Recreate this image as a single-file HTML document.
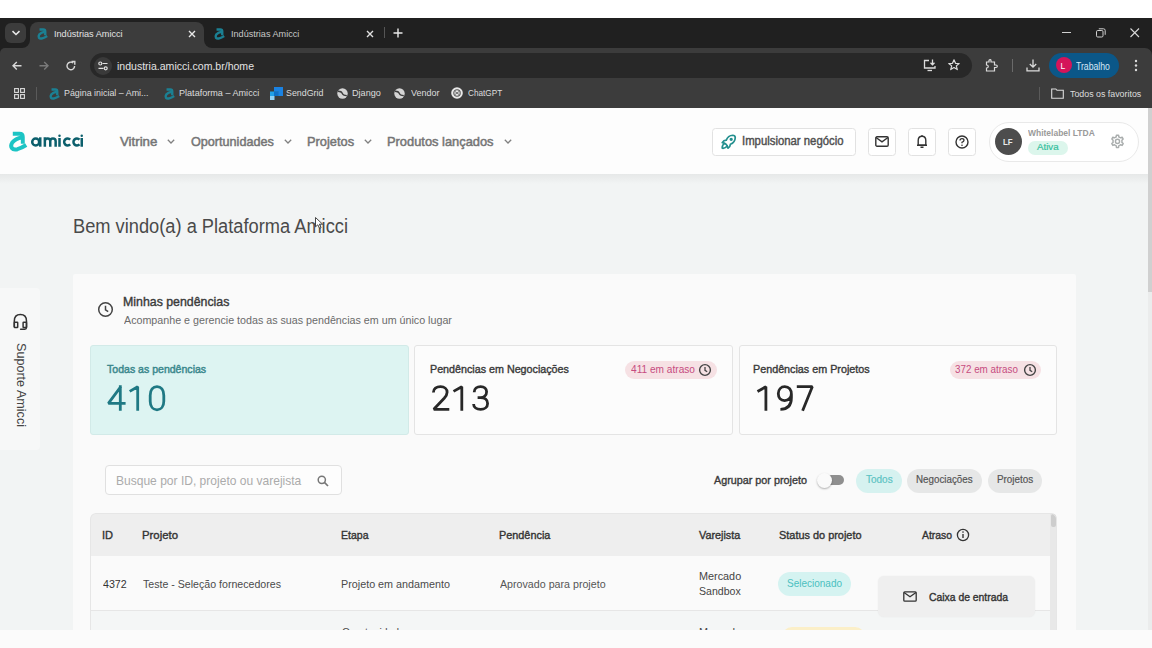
<!DOCTYPE html>
<html><head><meta charset="utf-8">
<style>
*{box-sizing:border-box;margin:0;padding:0}
html,body{width:1152px;height:648px;overflow:hidden;background:#fff;font-family:"Liberation Sans",sans-serif}
.a{position:absolute}
.t{position:absolute;white-space:nowrap;line-height:1;transform-origin:0 0}
svg{position:absolute;overflow:visible}
</style></head><body>
<!-- browser chrome -->
<div class="a" style="left:0;top:18px;width:1152px;height:90px;background:#202020"></div>
<div class="a" style="left:0;top:48px;width:1152px;height:60px;background:#3c3c3c;border-radius:5px 7px 0 0"></div>
<!-- active tab -->
<div class="a" style="left:30px;top:22px;width:174px;height:26px;background:#3c3c3c;border-radius:8px 8px 0 0"></div>
<div class="a" style="left:22px;top:40px;width:8px;height:8px;background:#3c3c3c"></div>
<div class="a" style="left:22px;top:40px;width:8px;height:8px;background:#202020;border-radius:0 0 8px 0"></div>
<!-- tab dropdown -->
<div class="a" style="left:5px;top:23px;width:21px;height:20px;background:#3c3c3c;border-radius:6px"></div>
<svg style="left:11px;top:30px" width="10" height="6"><path d="M1.5 1.2 L5 4.5 L8.5 1.2" fill="none" stroke="#e8e8e8" stroke-width="1.6"/></svg>
<div class="a" style="left:204px;top:40px;width:8px;height:8px;background:#3c3c3c"></div>
<div class="a" style="left:204px;top:40px;width:8px;height:8px;background:#202020;border-radius:0 0 0 8px"></div>
<svg style="left:37px;top:28px" width="11" height="12" viewBox="3 3 18 21"><path d="M6.8 5.7 H13.5 Q16.8 5.7 16.8 9 V15.8" fill="none" stroke="#1b8093" stroke-width="4.2"/><path d="M16 9.5 Q9.5 10.5 6.3 14.5 Q4.3 17.5 5.8 20 Q7.5 22.3 11.5 21.2 Q15.5 20 20.2 17" fill="none" stroke="#1b8093" stroke-width="4.3"/></svg>
<div class="t" style="left:53.53px;top:29.00px;font-size:9.8px;color:#e3e3e3;transform:scaleX(0.9332);">Indústrias Amicci</div>
<svg style="left:188px;top:30px" width="8" height="8"><path d="M1 1 L7 7 M7 1 L1 7" stroke="#e8e8e8" stroke-width="1.4"/></svg>
<!-- second tab -->
<svg style="left:214px;top:28px" width="11" height="12" viewBox="3 3 18 21"><path d="M6.8 5.7 H13.5 Q16.8 5.7 16.8 9 V15.8" fill="none" stroke="#1b8093" stroke-width="4.2"/><path d="M16 9.5 Q9.5 10.5 6.3 14.5 Q4.3 17.5 5.8 20 Q7.5 22.3 11.5 21.2 Q15.5 20 20.2 17" fill="none" stroke="#1b8093" stroke-width="4.3"/></svg>
<div class="t" style="left:231.40px;top:29.00px;font-size:9.8px;color:#c8c8c8;transform:scaleX(0.9292);">Indústrias Amicci</div>
<svg style="left:366px;top:30px" width="8" height="8"><path d="M1 1 L7 7 M7 1 L1 7" stroke="#e0e0e0" stroke-width="1.4"/></svg>
<div class="a" style="left:384px;top:27px;width:1px;height:11px;background:#555"></div>
<svg style="left:393px;top:28px" width="10" height="10"><path d="M5 0.5 V9.5 M0.5 5 H9.5" stroke="#e8e8e8" stroke-width="1.4"/></svg>
<!-- window controls -->
<div class="a" style="left:1062px;top:32px;width:9px;height:1px;background:#d0d0d0"></div>
<svg style="left:1096px;top:28px" width="10" height="10"><rect x="0.5" y="2.5" width="6.5" height="6.5" rx="1.2" fill="none" stroke="#d0d0d0" stroke-width="1"/><path d="M2.8 0.8 H7.5 Q9.2 0.8 9.2 2.5 V6.8" fill="none" stroke="#d0d0d0" stroke-width="1"/></svg>
<svg style="left:1130px;top:28px" width="10" height="10"><path d="M0.5 0.5 L9 9 M9 0.5 L0.5 9" stroke="#d8d8d8" stroke-width="1.1"/></svg>
<!-- toolbar -->
<svg style="left:12px;top:61px" width="10" height="10"><path d="M9.5 4.8 H1 M4.8 1 L1 4.8 L4.8 8.6" fill="none" stroke="#d8d8d8" stroke-width="1.4"/></svg>
<svg style="left:39px;top:61px" width="10" height="10"><path d="M0.5 4.8 H9 M5.2 1 L9 4.8 L5.2 8.6" fill="none" stroke="#7a7a7a" stroke-width="1.4"/></svg>
<svg style="left:66px;top:61px" width="10" height="10"><path d="M8.6 5 A3.8 3.8 0 1 1 7.2 2" fill="none" stroke="#d8d8d8" stroke-width="1.4"/><path d="M5.5 0.5 H8.8 V3.8" fill="none" stroke="#d8d8d8" stroke-width="1.4"/></svg>
<div class="a" style="left:90px;top:53px;width:882px;height:25px;background:#282828;border-radius:13px"></div>
<div class="a" style="left:94px;top:57px;width:18px;height:18px;background:#3a3a3a;border-radius:9px"></div>
<svg style="left:98px;top:61px" width="10" height="10"><circle cx="2.3" cy="2.5" r="1.5" fill="none" stroke="#e0e0e0" stroke-width="1.2"/><path d="M4.5 2.5 H9.5 M0.5 7.3 H5.5" stroke="#e0e0e0" stroke-width="1.2"/><circle cx="7.7" cy="7.3" r="1.5" fill="none" stroke="#e0e0e0" stroke-width="1.2"/></svg>
<div class="t" style="left:116.65px;top:60.00px;font-size:11.6px;color:#e3e3e3;transform:scaleX(0.9087);">industria.amicci.com.br/home</div>
<svg style="left:923px;top:59px" width="14" height="13"><path d="M6 1.5 H1.5 V9 H12 V7" fill="none" stroke="#dcdcdc" stroke-width="1.3"/><path d="M4.5 11.5 H9" stroke="#dcdcdc" stroke-width="1.3"/><path d="M9.5 0.5 V5.5 M7.5 3.8 L9.5 5.8 L11.5 3.8" fill="none" stroke="#dcdcdc" stroke-width="1.3"/></svg>
<svg style="left:948px;top:59px" width="12" height="12"><path d="M6 0.8 L7.5 4.3 L11.2 4.5 L8.3 6.9 L9.3 10.6 L6 8.5 L2.7 10.6 L3.7 6.9 L0.8 4.5 L4.5 4.3 Z" fill="none" stroke="#dcdcdc" stroke-width="1.2" stroke-linejoin="round"/></svg>
<svg style="left:985px;top:59px" width="14" height="13"><path d="M1.5 3 H4 V1.5 Q4 0.7 5 0.7 Q6 0.7 6 1.5 V3 H9.5 V6 H11 Q12.3 6 12.3 7.3 Q12.3 8.5 11 8.5 H9.5 V12 H1.5 V9 Q3.3 9 3.3 7.5 Q3.3 6 1.5 6 Z" fill="none" stroke="#dcdcdc" stroke-width="1.2"/></svg>
<div class="a" style="left:1012px;top:59px;width:1px;height:13px;background:#6a6a6a"></div>
<svg style="left:1026px;top:59px" width="14" height="13"><path d="M7 0.5 V8 M3.8 5 L7 8.2 L10.2 5 M1 8.5 V11.8 H13 V8.5" fill="none" stroke="#dcdcdc" stroke-width="1.3"/></svg>
<div class="a" style="left:1049px;top:53px;width:70px;height:25px;background:#0b5788;border-radius:13px"></div>
<div class="a" style="left:1056px;top:57px;width:16px;height:16px;background:#d4145a;border-radius:8px"></div>
<div class="t" style="left:1060.40px;top:62.00px;font-size:8.5px;color:#fff;">L</div>
<div class="t" style="left:1076.36px;top:61.00px;font-size:10.5px;color:#d6e8f8;transform:scaleX(0.8257);">Trabalho</div>
<svg style="left:1134px;top:59px" width="4" height="13"><circle cx="2" cy="2" r="1.2" fill="#dcdcdc"/><circle cx="2" cy="6.5" r="1.2" fill="#dcdcdc"/><circle cx="2" cy="11" r="1.2" fill="#dcdcdc"/></svg>
<!-- bookmarks bar -->
<svg style="left:14px;top:88px" width="11" height="11"><rect x="0.6" y="0.6" width="3.8" height="3.8" fill="none" stroke="#dcdcdc" stroke-width="1.1"/><rect x="6.6" y="0.6" width="3.8" height="3.8" fill="none" stroke="#dcdcdc" stroke-width="1.1"/><rect x="0.6" y="6.6" width="3.8" height="3.8" fill="none" stroke="#dcdcdc" stroke-width="1.1"/><rect x="6.6" y="6.6" width="3.8" height="3.8" fill="none" stroke="#dcdcdc" stroke-width="1.1"/></svg>
<div class="a" style="left:36px;top:87px;width:1px;height:13px;background:#5a5a5a"></div>
<svg style="left:49px;top:88px" width="11" height="12" viewBox="3 3 18 21"><path d="M6.8 5.7 H13.5 Q16.8 5.7 16.8 9 V15.8" fill="none" stroke="#1b8093" stroke-width="4.2"/><path d="M16 9.5 Q9.5 10.5 6.3 14.5 Q4.3 17.5 5.8 20 Q7.5 22.3 11.5 21.2 Q15.5 20 20.2 17" fill="none" stroke="#1b8093" stroke-width="4.3"/></svg>
<div class="t" style="left:63.59px;top:88.00px;font-size:9.6px;color:#dcdcdc;transform:scaleX(0.9256);">Página inicial – Ami...</div>
<svg style="left:164px;top:88px" width="11" height="12" viewBox="3 3 18 21"><path d="M6.8 5.7 H13.5 Q16.8 5.7 16.8 9 V15.8" fill="none" stroke="#1b8093" stroke-width="4.2"/><path d="M16 9.5 Q9.5 10.5 6.3 14.5 Q4.3 17.5 5.8 20 Q7.5 22.3 11.5 21.2 Q15.5 20 20.2 17" fill="none" stroke="#1b8093" stroke-width="4.3"/></svg>
<div class="t" style="left:179.36px;top:88.00px;font-size:9.6px;color:#dcdcdc;transform:scaleX(0.9465);">Plataforma – Amicci</div>
<svg style="left:270px;top:87px" width="13" height="13"><rect x="4" y="0" width="9" height="4.5" fill="#1a82e2"/><rect x="0" y="4.5" width="8.5" height="4.5" fill="#21a0e8"/><rect x="4" y="4.5" width="4.5" height="4.5" fill="#0f6fc6"/><rect x="0" y="9" width="4.5" height="4" fill="#8fd0f5"/><rect x="8.5" y="0" width="4.5" height="9" fill="#1a82e2"/></svg>
<div class="t" style="left:286.15px;top:88.00px;font-size:9.6px;color:#dcdcdc;transform:scaleX(0.9234);">SendGrid</div>
<svg style="left:337px;top:88px" width="11" height="11" viewBox="0 0 11 11"><circle cx="5.5" cy="5.5" r="5.2" fill="#d4d4d4"/><path d="M1 3.2 Q4.5 3.2 5.2 5.2 Q5.8 7.6 9.8 7.6" fill="none" stroke="#3c3c3c" stroke-width="1.4"/></svg>
<div class="t" style="left:352.36px;top:88.00px;font-size:9.6px;color:#dcdcdc;transform:scaleX(0.9473);">Django</div>
<svg style="left:394px;top:88px" width="11" height="11" viewBox="0 0 11 11"><circle cx="5.5" cy="5.5" r="5.2" fill="#d4d4d4"/><path d="M1 3.2 Q4.5 3.2 5.2 5.2 Q5.8 7.6 9.8 7.6" fill="none" stroke="#3c3c3c" stroke-width="1.4"/></svg>
<div class="t" style="left:410.54px;top:88.00px;font-size:9.6px;color:#dcdcdc;transform:scaleX(0.9370);">Vendor</div>
<svg style="left:451px;top:87px" width="12" height="12"><circle cx="6" cy="6" r="5.8" fill="#e8e8e8"/><circle cx="6" cy="6" r="3.2" fill="none" stroke="#555" stroke-width="1.1"/><path d="M4 4.5 L8 7.5 M8 4.5 L4 7.5" stroke="#555" stroke-width="0.8"/></svg>
<div class="t" style="left:467.73px;top:88.00px;font-size:9.6px;color:#dcdcdc;transform:scaleX(0.8552);">ChatGPT</div>
<div class="a" style="left:1039px;top:87px;width:1px;height:13px;background:#5a5a5a"></div>
<svg style="left:1051px;top:88px" width="13" height="11"><path d="M0.7 1 H4.8 L6 2.3 H12.3 V10.3 H0.7 Z" fill="none" stroke="#dcdcdc" stroke-width="1.1"/></svg>
<div class="t" style="left:1070.37px;top:89.00px;font-size:9.6px;color:#dcdcdc;transform:scaleX(0.9212);">Todos os favoritos</div>

<!-- PAGE -->
<div class="a" style="left:0;top:108px;width:1148px;height:522px;background:#f2f4f4;overflow:hidden">
 <div class="a" style="left:0;top:66px;width:1148px;height:10px;background:linear-gradient(#e6e8e8,#f2f4f4)"></div>
 <div class="a" style="left:0;top:0;width:1148px;height:66px;background:#fdfdfd"></div>
</div>
<!-- header content -->
<svg style="left:6px;top:128px" width="24" height="26" viewBox="0 0 24 26">
<path d="M6.8 5.7 H13.5 Q16.8 5.7 16.8 9 V15.8" fill="none" stroke="#1cc4c4" stroke-width="3.9"/>
<path d="M16 9.5 Q9.5 10.5 6.3 14.5 Q4.3 17.5 5.8 20 Q7.5 22.3 11.5 21.2 Q15.5 20 20.2 17" fill="none" stroke="#1cc4c4" stroke-width="4"/>
</svg>
<svg style="left:8px;top:130px" width="80" height="24" viewBox="0 0 80 24">
<g fill="none" stroke="#0c5f6c" stroke-width="2.5">
<circle cx="27.7" cy="12" r="3.5"/><path d="M32.25 7.3 V16.7"/>
<path d="M36.85 7.3 V16.7 M36.85 11.2 Q36.85 8.55 39.55 8.55 Q42.25 8.55 42.25 11.2 V16.7 M42.25 11.2 Q42.25 8.55 44.95 8.55 Q47.65 8.55 47.65 11.2 V16.7"/>
<path d="M51.5 8 V16.7 M73.75 8 V16.7"/>
<path d="M62.2 9.6 A3.5 3.5 0 1 0 62.2 14.4 M71.5 9.6 A3.5 3.5 0 1 0 71.5 14.4"/>
</g>
<circle cx="51.5" cy="5.8" r="1.25" fill="#0c5f6c"/><circle cx="73.75" cy="5.8" r="1.25" fill="#0c5f6c"/>
</svg>
<div class="t" style="left:120.10px;top:135.00px;font-size:13.1px;-webkit-text-stroke:0.5px #757575;color:#757575;transform:scaleX(1.0137);">Vitrine</div>
<div class="t" style="left:190.89px;top:135.00px;font-size:13.1px;-webkit-text-stroke:0.5px #757575;color:#757575;transform:scaleX(0.9640);">Oportunidades</div>
<div class="t" style="left:307.08px;top:135.00px;font-size:13.1px;-webkit-text-stroke:0.5px #757575;color:#757575;transform:scaleX(0.9796);">Projetos</div>
<div class="t" style="left:387.10px;top:135.00px;font-size:13.1px;-webkit-text-stroke:0.5px #757575;color:#757575;transform:scaleX(0.9824);">Produtos lançados</div>
<svg style="left:167px;top:139px" width="8" height="5"><path d="M0.8 0.8 L4 4 L7.2 0.8" fill="none" stroke="#808080" stroke-width="1.3"/></svg>
<svg style="left:284px;top:139px" width="8" height="5"><path d="M0.8 0.8 L4 4 L7.2 0.8" fill="none" stroke="#808080" stroke-width="1.3"/></svg>
<svg style="left:364px;top:139px" width="8" height="5"><path d="M0.8 0.8 L4 4 L7.2 0.8" fill="none" stroke="#808080" stroke-width="1.3"/></svg>
<svg style="left:504px;top:139px" width="8" height="5"><path d="M0.8 0.8 L4 4 L7.2 0.8" fill="none" stroke="#808080" stroke-width="1.3"/></svg>

<div class="a" style="left:712px;top:128px;width:144px;height:28px;border:1px solid #e2e2e2;border-radius:3.5px;background:#fff"></div>
<svg style="left:718.7px;top:132px" width="19.5" height="19.5" viewBox="0 0 24 24"><g fill="none" stroke="#24908f" stroke-width="2.1" stroke-linecap="round" stroke-linejoin="round"><path d="M4 13a8 8 0 0 1 7 7a6 6 0 0 0 3 -5a9 9 0 0 0 6 -8a3 3 0 0 0 -3 -3a9 9 0 0 0 -8 6a6 6 0 0 0 -5 3"/><path d="M7 14a6 6 0 0 0 -3 6a6 6 0 0 0 6 -3"/><circle cx="15" cy="9" r="1"/></g></svg>
<div class="t" style="left:741.78px;top:136.00px;font-size:11.9px;-webkit-text-stroke:0.42px #505050;color:#505050;transform:scaleX(0.9538);">Impulsionar negócio</div>

<div class="a" style="left:868px;top:128px;width:28px;height:28px;border:1px solid #e2e2e2;border-radius:3.5px;background:#fff"></div>
<svg style="left:875px;top:136px" width="14" height="11"><rect x="0.8" y="0.8" width="12.4" height="9.4" rx="1.2" fill="none" stroke="#333" stroke-width="1.4"/><path d="M1 1.5 L7 5.8 L13 1.5" fill="none" stroke="#333" stroke-width="1.4"/></svg>
<div class="a" style="left:908px;top:128px;width:28px;height:28px;border:1px solid #e2e2e2;border-radius:3.5px;background:#fff"></div>
<svg style="left:916px;top:134px" width="12" height="15"><path d="M2.2 11 V6.5 Q2.2 2.2 6 2.2 Q9.8 2.2 9.8 6.5 V11 Z M1 11.2 H11 M4.5 13.3 H7.5 M6 1 V2.2" fill="none" stroke="#333" stroke-width="1.4" stroke-linejoin="round"/></svg>
<div class="a" style="left:948px;top:128px;width:28px;height:28px;border:1px solid #e2e2e2;border-radius:3.5px;background:#fff"></div>
<svg style="left:955px;top:135px" width="14" height="14"><circle cx="7" cy="7" r="6" fill="none" stroke="#333" stroke-width="1.4"/><path d="M5 5.5 Q5 3.6 7 3.6 Q9 3.6 9 5.3 Q9 6.5 7 7.3 V8.3" fill="none" stroke="#333" stroke-width="1.3"/><circle cx="7" cy="10.2" r="0.8" fill="#333"/></svg>

<div class="a" style="left:989px;top:122px;width:150px;height:40px;border:1px solid #e9e9e9;border-radius:20px;background:#fff"></div>
<div class="a" style="left:995px;top:128px;width:27px;height:27px;border-radius:50%;background:#4d4d4d"></div>
<div class="t" style="left:1002.83px;top:138.00px;font-size:9.2px;font-weight:bold;color:#eaeaea;transform:scaleX(0.8556);">LF</div>
<div class="t" style="left:1027.53px;top:129.00px;font-size:9.3px;font-weight:bold;color:#9a9a9a;transform:scaleX(0.9124);">Whitelabel LTDA</div>
<div class="a" style="left:1028px;top:141px;width:40px;height:14px;border-radius:7px;background:#dcf6ec"></div>
<div class="t" style="left:1036.92px;top:142.00px;font-size:9.6px;-webkit-text-stroke:0.2px #34c09c;color:#34c09c;transform:scaleX(1.0101);">Ativa</div>
<svg style="left:1110px;top:134px" width="15" height="15" viewBox="0 0 24 24"><path d="M10.3 2 H13.7 L14.2 4.8 Q15.6 5.3 16.8 6.2 L19.4 5.1 L21.1 8.1 L19 9.9 Q19.3 11.9 19 13.4 L21.1 15.3 L19.4 18.3 L16.8 17.2 Q15.6 18.2 14.2 18.6 L13.7 21.6 H10.3 L9.8 18.6 Q8.3 18.1 7.2 17.2 L4.6 18.3 L2.9 15.3 L5 13.4 Q4.7 11.7 5 9.9 L2.9 8.1 L4.6 5.1 L7.2 6.2 Q8.4 5.3 9.8 4.8 Z" fill="none" stroke="#a9adad" stroke-width="2.3" stroke-linejoin="round"/><circle cx="12" cy="11.8" r="3.3" fill="none" stroke="#a9adad" stroke-width="2.3"/></svg>

<!-- welcome -->
<div class="t" style="left:72.76px;top:216.00px;font-size:20.0px;color:#4a4a4a;transform:scaleX(0.9128);">Bem vindo(a) a Plataforma Amicci</div>

<!-- support tab -->
<div class="a" style="left:0;top:288px;width:40px;height:162px;background:#f7f8f8;border-radius:0 4px 4px 0"></div>
<svg style="left:12px;top:313px" width="17" height="18" viewBox="0 0 17 18"><path d="M2.3 13.5 V8.2 Q2.3 1.6 8.4 1.6 Q14.5 1.6 14.5 8.2 V14.6 Q14.5 16.3 12.8 16.3 H8.6" fill="none" stroke="#333" stroke-width="1.5" stroke-linecap="round"/><rect x="2.3" y="9.2" width="3.4" height="5.4" rx="0.6" fill="none" stroke="#333" stroke-width="1.5"/><rect x="11.1" y="9.2" width="3.4" height="5.4" rx="0.6" fill="none" stroke="#333" stroke-width="1.5"/></svg>
<div class="t" style="left:26.9px;top:342.6px;font-size:12.6px;color:#444;transform-origin:0 0;transform:rotate(90deg)">Suporte Amicci</div>

<!-- main card -->
<div class="a" style="left:73px;top:274px;width:1003px;height:360px;background:#fafafa;border-radius:2px"></div>
<svg style="left:97px;top:301px" width="17" height="17"><circle cx="8.5" cy="8.5" r="6.8" fill="none" stroke="#444" stroke-width="1.5"/><path d="M8.5 4.8 V8.8 L11.2 10.6" fill="none" stroke="#444" stroke-width="1.5"/></svg>
<div class="t" style="left:123.33px;top:296.00px;font-size:12.6px;-webkit-text-stroke:0.38px #3a3a3a;color:#3a3a3a;transform:scaleX(0.9806);">Minhas pendências</div>
<div class="t" style="left:124.04px;top:315.00px;font-size:11.0px;color:#6a6a6a;transform:scaleX(0.9732);">Acompanhe e gerencie todas as suas pendências em um único lugar</div>

<div class="a" style="left:90px;top:345px;width:319px;height:90px;background:#ddf4f2;border:1px solid #d2eae8;border-radius:3px"></div>
<div class="t" style="left:106.64px;top:364.00px;font-size:10.9px;-webkit-text-stroke:0.45px #3a888d;color:#3a888d;transform:scaleX(0.9687);">Todas as pendências</div>

<div class="a" style="left:414px;top:345px;width:319px;height:90px;background:#fcfcfc;border:1px solid #e4e4e4;border-radius:3px"></div>
<div class="t" style="left:429.84px;top:364.00px;font-size:10.9px;-webkit-text-stroke:0.38px #3a3a3a;color:#3a3a3a;transform:scaleX(0.9845);">Pendências em Negociações</div>
<div class="a" style="left:625px;top:361px;width:92px;height:18px;border-radius:9px;background:#f6e1e4"></div>
<div class="t" style="left:631.47px;top:364.00px;font-size:11.0px;color:#c64c80;transform:scaleX(0.9203);">411 em atraso</div>
<svg style="left:698px;top:363px" width="14" height="14"><circle cx="7" cy="7" r="5.4" fill="none" stroke="#444" stroke-width="1.4"/><path d="M7 4 V7.3 L9.2 8.7" fill="none" stroke="#444" stroke-width="1.3"/></svg>

<div class="a" style="left:739px;top:345px;width:318px;height:90px;background:#fcfcfc;border:1px solid #e4e4e4;border-radius:3px"></div>
<div class="t" style="left:753.45px;top:364.00px;font-size:10.9px;-webkit-text-stroke:0.38px #3a3a3a;color:#3a3a3a;transform:scaleX(0.9880);">Pendências em Projetos</div>
<div class="a" style="left:950px;top:361px;width:91px;height:18px;border-radius:9px;background:#f6e1e4"></div>
<div class="t" style="left:955.47px;top:364.00px;font-size:11.0px;color:#c64c80;transform:scaleX(0.8944);">372 em atraso</div>
<svg style="left:1023px;top:363px" width="14" height="14"><circle cx="7" cy="7" r="5.4" fill="none" stroke="#444" stroke-width="1.4"/><path d="M7 4 V7.3 L9.2 8.7" fill="none" stroke="#444" stroke-width="1.3"/></svg>

<svg style="left:0;top:0" width="1152" height="648"><g fill="none" stroke-width="2.8" stroke-linejoin="bevel">
<path stroke="#1f7984" d="M121 386.3 L108.4 403.4 H125.6 M120.3 385.2 V410.7 M129.7 391.4 L137.7 386.7 V410.7 M157 386.6 C153 386.6 150.2 389.8 150.2 395.5 V401.2 C150.2 406.5 153 409.8 157 409.8 C161 409.8 163.8 406.5 163.8 401.2 V395.5 C163.8 389.8 161 386.6 157 386.6 Z"/>
<path stroke="#282828" d="M433.4 392.5 C433.4 388.9 436.4 386.6 440.5 386.6 C444.5 386.6 447.1 389 447.1 392.2 C447.1 394.4 446 396.2 444.2 398.2 L433.8 409.3 H449.3 M453.5 391.4 L461.8 386.7 V410.7 M474.2 392.2 C474.2 388.9 477 386.6 480.6 386.6 C484.3 386.6 486.6 388.7 486.6 391.8 C486.6 395.2 484 397.6 480.4 397.6 H477.6 M480.4 397.6 C484.8 397.6 487.6 399.8 487.6 403.4 C487.6 407 484.7 409.3 480.6 409.3 C476.6 409.3 473.6 407.2 473.6 403.9"/>
<path stroke="#282828" d="M757.5 391.5 L765.9 386.7 V410.7 M791.4 393.5 C791.4 397.5 788.6 400.6 784.6 400.6 C780.6 400.6 778.3 397.6 778.3 393.6 C778.3 389.6 781 386.6 784.8 386.6 C788.9 386.6 791.4 389.6 791.4 394.5 V397.5 C791.4 405.3 787.5 409.3 780.4 409.4 M796.8 386.7 H812.3 L802.6 410.7"/>
</g></svg>
<!-- search/filter -->
<div class="a" style="left:105px;top:465px;width:237px;height:30px;border:1px solid #e0e0e0;border-radius:4px;background:#fdfdfd"></div>
<div class="t" style="left:115.55px;top:476.00px;font-size:11.9px;color:#ababab;transform:scaleX(1.0121);">Busque por ID, projeto ou varejista</div>
<svg style="left:317px;top:475px" width="12" height="12"><circle cx="4.8" cy="4.8" r="3.6" fill="none" stroke="#777" stroke-width="1.5"/><path d="M7.4 7.4 L11 11" stroke="#777" stroke-width="1.7"/></svg>

<div class="t" style="left:713.78px;top:475.00px;font-size:11.3px;-webkit-text-stroke:0.38px #3a3a3a;color:#3a3a3a;transform:scaleX(0.9542);">Agrupar por projeto</div>
<div class="a" style="left:822px;top:475px;width:22px;height:10px;border-radius:5px;background:#8f8f8f"></div>
<div class="a" style="left:817px;top:473px;width:15px;height:15px;border-radius:50%;background:#fafafa;box-shadow:0 1px 2px rgba(0,0,0,.3)"></div>
<div class="a" style="left:856px;top:469px;width:46px;height:24px;border-radius:12px;background:#d6f2f0"></div>
<div class="t" style="left:866.22px;top:474.00px;font-size:10.9px;-webkit-text-stroke:0.2px #5cc3c3;color:#5cc3c3;transform:scaleX(0.9174);">Todos</div>
<div class="a" style="left:907px;top:469px;width:75px;height:24px;border-radius:12px;background:#e6e7e7"></div>
<div class="t" style="left:915.71px;top:474.00px;font-size:10.9px;-webkit-text-stroke:0.2px #555;color:#555;transform:scaleX(0.8984);">Negociações</div>
<div class="a" style="left:988px;top:469px;width:54px;height:24px;border-radius:12px;background:#e6e7e7"></div>
<div class="t" style="left:996.65px;top:474.00px;font-size:10.9px;-webkit-text-stroke:0.2px #555;color:#555;transform:scaleX(0.9061);">Projetos</div>

<!-- table -->
<div class="a" style="left:90px;top:513px;width:967px;height:130px;background:#fafafa;border-radius:6px 6px 0 0;overflow:hidden">
 <div class="a" style="left:0;top:0;width:967px;height:43px;background:#eeeeee"></div>
 <div class="a" style="left:0;top:97px;width:967px;height:1px;background:#e6e6e6"></div>
 <div class="a" style="left:0;top:98px;width:967px;height:40px;background:#f4f6f6"></div>
 <div class="a" style="left:960px;top:0;width:7px;height:130px;background:#e8e8e8"></div>
 <div class="a" style="left:961px;top:1px;width:5px;height:13px;background:#cdcdcd;border-radius:2px"></div>
 <div class="a" style="left:0;top:0;width:967px;height:140px;border:1px solid #e6e6e6;border-bottom:none;border-radius:6px 6px 0 0"></div>
</div>
<div class="t" style="left:102.42px;top:529.00px;font-size:11.6px;-webkit-text-stroke:0.38px #333;color:#333;transform:scaleX(0.9526);">ID</div>
<div class="t" style="left:141.98px;top:529.00px;font-size:11.6px;-webkit-text-stroke:0.38px #333;color:#333;transform:scaleX(0.9782);">Projeto</div>
<div class="t" style="left:341.02px;top:529.00px;font-size:11.6px;-webkit-text-stroke:0.38px #333;color:#333;transform:scaleX(0.9073);">Etapa</div>
<div class="t" style="left:499.45px;top:529.00px;font-size:11.6px;-webkit-text-stroke:0.38px #333;color:#333;transform:scaleX(0.9371);">Pendência</div>
<div class="t" style="left:698.96px;top:529.00px;font-size:11.6px;-webkit-text-stroke:0.38px #333;color:#333;transform:scaleX(0.9333);">Varejista</div>
<div class="t" style="left:778.81px;top:529.00px;font-size:11.6px;-webkit-text-stroke:0.38px #333;color:#333;transform:scaleX(0.9414);">Status do projeto</div>
<div class="t" style="left:921.78px;top:529.00px;font-size:11.6px;-webkit-text-stroke:0.38px #333;color:#333;transform:scaleX(0.8973);">Atraso</div>
<svg style="left:956px;top:528px" width="14" height="14"><circle cx="7" cy="7" r="5.6" fill="none" stroke="#333" stroke-width="1.3"/><path d="M7 6 V10" stroke="#333" stroke-width="1.4"/><circle cx="7" cy="4.1" r="0.8" fill="#333"/></svg>

<div class="t" style="left:103.38px;top:579.00px;font-size:11.8px;color:#333;transform:scaleX(0.9043);">4372</div>
<div class="t" style="left:143.03px;top:579.00px;font-size:11.8px;color:#4a4a4a;transform:scaleX(0.8994);">Teste - Seleção fornecedores</div>
<div class="t" style="left:341.03px;top:579.00px;font-size:11.8px;color:#4a4a4a;transform:scaleX(0.9127);">Projeto em andamento</div>
<div class="t" style="left:500.38px;top:579.00px;font-size:11.8px;color:#555;transform:scaleX(0.9043);">Aprovado para projeto</div>
<div class="t" style="left:698.66px;top:571.00px;font-size:11.4px;color:#444;transform:scaleX(0.9514);">Mercado</div>
<div class="t" style="left:698.62px;top:586.00px;font-size:11.4px;color:#444;transform:scaleX(0.9274);">Sandbox</div>
<div class="a" style="left:778px;top:572px;width:73px;height:24px;border-radius:12px;background:#d5f3f1"></div>
<div class="t" style="left:787.10px;top:579.00px;font-size:10.2px;color:#4bc0c0;transform:scaleX(0.9818);">Selecionado</div>
<div class="t" style="left:342.05px;top:627.00px;font-size:11.8px;color:#4a4a4a;transform:scaleX(0.8779);">Oportunidade em</div>
<div class="t" style="left:698.66px;top:627.00px;font-size:11.4px;color:#444;transform:scaleX(0.9514);">Mercado</div>
<div class="a" style="left:782px;top:627px;width:83px;height:20px;border-radius:10px;background:#fbefc8"></div>

<!-- popup -->
<div class="a" style="left:878px;top:576px;width:157px;height:41px;border-radius:6px;background:#efefef;box-shadow:0 0 2px rgba(0,0,0,.06)"></div>
<svg style="left:903px;top:591px" width="14" height="11"><rect x="0.8" y="0.8" width="12.4" height="9.4" rx="1" fill="none" stroke="#333" stroke-width="1.3"/><path d="M1 1.5 L7 5.8 L13 1.5" fill="none" stroke="#333" stroke-width="1.3"/></svg>
<div class="t" style="left:929.46px;top:592.00px;font-size:10.8px;-webkit-text-stroke:0.38px #333;color:#333;transform:scaleX(0.9610);">Caixa de entrada</div>

<svg style="left:315px;top:217px" width="9" height="12" viewBox="0 0 9 12"><path d="M0.5 0.5 L0.5 9.8 L2.8 7.8 L4.6 11.3 L6.1 10.6 L4.4 7.2 L7.6 7.2 Z" fill="#fff" stroke="#333" stroke-width="0.9" stroke-linejoin="round"/></svg>
<div class="a" style="left:1148px;top:108px;width:4px;height:522px;background:#ebecec"></div>
<div class="a" style="left:1148px;top:108px;width:4px;height:184px;background:#d0d0d0"></div>
<div class="a" style="left:0;top:630px;width:1152px;height:18px;background:#fbfbfb"></div>
</body></html>
